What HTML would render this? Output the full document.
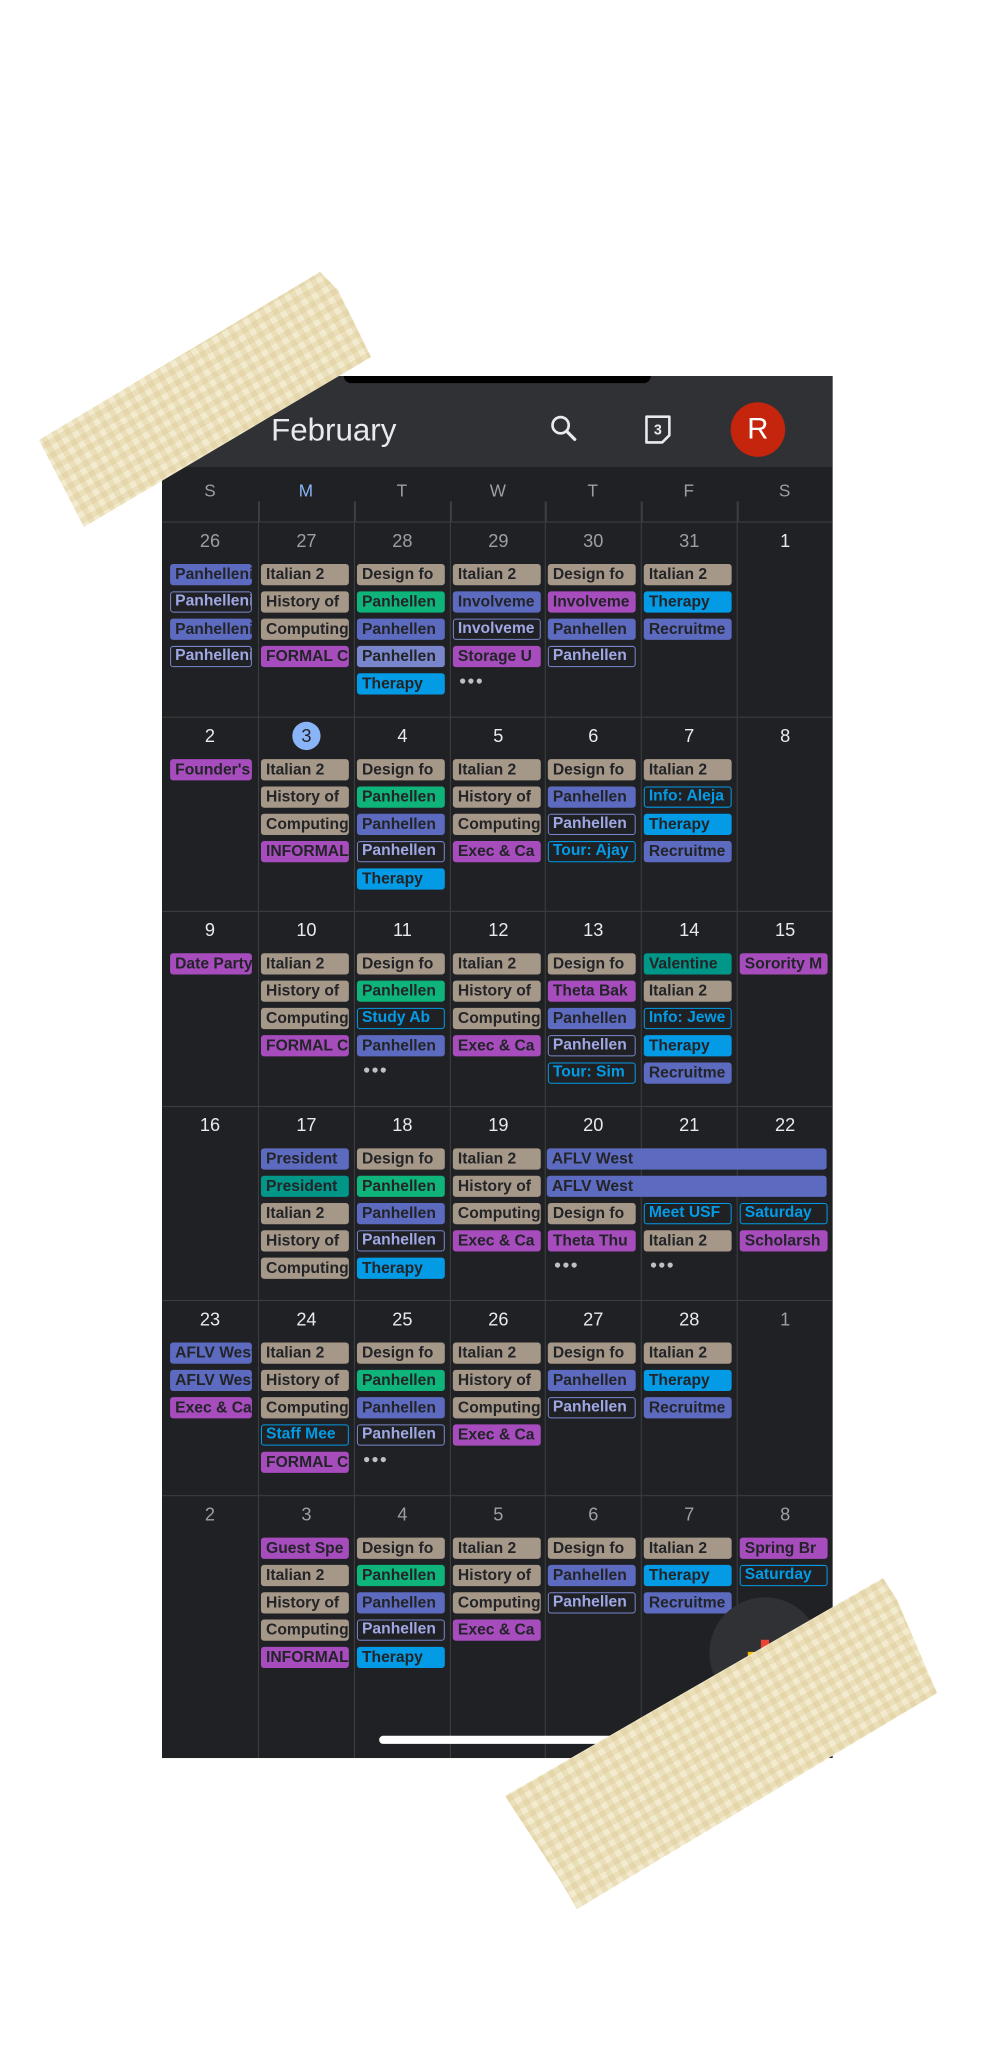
<!DOCTYPE html>
<html><head><meta charset="utf-8"><style>
*{margin:0;padding:0;box-sizing:border-box}
body{width:995px;height:2048px;background:#fff;position:relative;overflow:hidden;font-family:"Liberation Sans",sans-serif}
#scr{position:absolute;left:162px;top:376px;width:664px;height:1367px;background:#202124;overflow:hidden;transform-origin:0 0;transform:scale(1.01,1.011)}
#hdr{position:absolute;left:0;top:0;width:664px;height:90px;background:#303134}
#notch{position:absolute;left:180px;top:0;width:304px;height:7px;background:#000;border-radius:0 0 12px 12px}
.wd{position:absolute;top:104px;width:95px;text-align:center;color:#9aa0a6;font-size:17px}
.row{position:absolute;left:0;width:664px;border-top:1.5px solid #3c4043}
.cell{position:absolute;top:0;height:100%;width:95px;border-left:1.5px solid #3c4043}
.cell.f{border-left:none}
.dn{position:absolute;top:7px;left:0;width:100%;text-align:center;color:#e8eaed;font-size:18px;line-height:22px}
.dn.g{color:#9aa0a6}
.ch{position:absolute;left:2px;width:87px;height:21px;border-radius:3px;font-size:15.5px;font-weight:bold;line-height:21px;padding-left:5px;white-space:nowrap;overflow:hidden;color:#232428}
.f .ch{left:8px;width:81px}
.P{background:#5c6bc0}.T{background:#a69888}.G{background:#0fb47a}.V{background:#a64cbd}.C{background:#039be5}.L{background:#7986cb}.E{background:#009688}
.Po{border:1.5px solid #7986cb;color:#9fa8e4;line-height:18px;padding-left:4px}
.Co{border:1.5px solid #039be5;color:#039be5;line-height:18px;padding-left:4px}
.more{position:absolute;left:8px;color:#bdc1c6;font-size:12px;letter-spacing:1px}
.s0{top:41px}.s1{top:68px}.s2{top:95px}.s3{top:122px}.s4{top:149px}
.tape{position:absolute;left:0;top:0;width:995px;height:2048px;background-color:#f3ebcf;
background-image:repeating-linear-gradient(60deg,rgba(215,195,135,.3) 0 6px,transparent 6px 12px),repeating-linear-gradient(-30deg,rgba(215,195,135,.3) 0 6px,transparent 6px 12px)}
</style></head><body>
<div id="scr">
<div id="hdr"></div><div id="notch"></div>
<div style="position:absolute;left:108px;top:36px;color:#e8eaed;font-size:31px">February</div>
<svg style="position:absolute;left:382px;top:36px" width="32" height="32" viewBox="0 0 24 24"><circle cx="9.5" cy="9.5" r="6" fill="none" stroke="#e8eaed" stroke-width="2"/><path d="M14 14l6 6" stroke="#e8eaed" stroke-width="2.4" stroke-linecap="round"/></svg>
<svg style="position:absolute;left:474px;top:36px" width="34" height="34" viewBox="0 0 24 24"><path d="M4 3h16v13l-5 5H4z" fill="none" stroke="#e8eaed" stroke-width="1.8" stroke-linejoin="round"/><text x="12" y="15.5" font-size="10" font-weight="bold" text-anchor="middle" fill="#e8eaed" font-family="Liberation Sans">3</text></svg>
<div style="position:absolute;left:563px;top:26px;width:54px;height:54px;border-radius:50%;background:#c5250c;color:#fff;font-size:29px;text-align:center;line-height:54px">R</div>
<div class="wd" style="left:0">S</div><div class="wd" style="left:95px;color:#8ab4f8">M</div><div class="wd" style="left:190px">T</div><div class="wd" style="left:285px">W</div><div class="wd" style="left:379px">T</div><div class="wd" style="left:474px">F</div><div class="wd" style="left:569px">S</div>
<div style="position:absolute;left:95px;top:124px;width:1.5px;height:20px;background:#3c4043;box-shadow:95px 0 #3c4043,190px 0 #3c4043,284px 0 #3c4043,379px 0 #3c4043,474px 0 #3c4043"></div>

<div class="row" style="top:144px;height:193px">
<div class="cell f" style="left:0"><div class="dn g">26</div><div class="ch P s0">Panhellenic</div><div class="ch Po s1">Panhellenic</div><div class="ch P s2">Panhellenic</div><div class="ch Po s3">Panhellenic</div></div>
<div class="cell" style="left:95px"><div class="dn g">27</div><div class="ch T s0">Italian 2</div><div class="ch T s1">History of</div><div class="ch T s2">Computing</div><div class="ch V s3">FORMAL C</div></div>
<div class="cell" style="left:190px"><div class="dn g">28</div><div class="ch T s0">Design fo</div><div class="ch G s1">Panhellen</div><div class="ch P s2">Panhellen</div><div class="ch L s3">Panhellen</div><div class="ch C s4">Therapy</div></div>
<div class="cell" style="left:285px"><div class="dn g">29</div><div class="ch T s0">Italian 2</div><div class="ch P s1">Involveme</div><div class="ch Po s2">Involveme</div><div class="ch V s3">Storage U</div><div class="more s4">●●●</div></div>
<div class="cell" style="left:379px"><div class="dn g">30</div><div class="ch T s0">Design fo</div><div class="ch V s1">Involveme</div><div class="ch P s2">Panhellen</div><div class="ch Po s3">Panhellen</div></div>
<div class="cell" style="left:474px"><div class="dn g">31</div><div class="ch T s0">Italian 2</div><div class="ch C s1">Therapy</div><div class="ch P s2">Recruitme</div></div>
<div class="cell" style="left:569px"><div class="dn">1</div></div>
</div>
<div class="row" style="top:337px;height:192px">
<div class="cell f" style="left:0"><div class="dn">2</div><div class="ch V s0">Founder's</div></div>
<div class="cell" style="left:95px"><div class="dn"><span style="display:inline-block;width:28px;height:28px;border-radius:50%;background:#8ab4f8;color:#202124;line-height:28px;margin-top:-3px">3</span></div><div class="ch T s0">Italian 2</div><div class="ch T s1">History of</div><div class="ch T s2">Computing</div><div class="ch V s3">INFORMAL</div></div>
<div class="cell" style="left:190px"><div class="dn">4</div><div class="ch T s0">Design fo</div><div class="ch G s1">Panhellen</div><div class="ch P s2">Panhellen</div><div class="ch Po s3">Panhellen</div><div class="ch C s4">Therapy</div></div>
<div class="cell" style="left:285px"><div class="dn">5</div><div class="ch T s0">Italian 2</div><div class="ch T s1">History of</div><div class="ch T s2">Computing</div><div class="ch V s3">Exec &amp; Ca</div></div>
<div class="cell" style="left:379px"><div class="dn">6</div><div class="ch T s0">Design fo</div><div class="ch P s1">Panhellen</div><div class="ch Po s2">Panhellen</div><div class="ch Co s3">Tour: Ajay</div></div>
<div class="cell" style="left:474px"><div class="dn">7</div><div class="ch T s0">Italian 2</div><div class="ch Co s1">Info: Aleja</div><div class="ch C s2">Therapy</div><div class="ch P s3">Recruitme</div></div>
<div class="cell" style="left:569px"><div class="dn">8</div></div>
</div>
<div class="row" style="top:529px;height:193px">
<div class="cell f" style="left:0"><div class="dn">9</div><div class="ch V s0">Date Party</div></div>
<div class="cell" style="left:95px"><div class="dn">10</div><div class="ch T s0">Italian 2</div><div class="ch T s1">History of</div><div class="ch T s2">Computing</div><div class="ch V s3">FORMAL C</div></div>
<div class="cell" style="left:190px"><div class="dn">11</div><div class="ch T s0">Design fo</div><div class="ch G s1">Panhellen</div><div class="ch Co s2">Study Ab</div><div class="ch P s3">Panhellen</div><div class="more s4">●●●</div></div>
<div class="cell" style="left:285px"><div class="dn">12</div><div class="ch T s0">Italian 2</div><div class="ch T s1">History of</div><div class="ch T s2">Computing</div><div class="ch V s3">Exec &amp; Ca</div></div>
<div class="cell" style="left:379px"><div class="dn">13</div><div class="ch T s0">Design fo</div><div class="ch V s1">Theta Bak</div><div class="ch P s2">Panhellen</div><div class="ch Po s3">Panhellen</div><div class="ch Co s4">Tour: Sim</div></div>
<div class="cell" style="left:474px"><div class="dn">14</div><div class="ch E s0">Valentine</div><div class="ch T s1">Italian 2</div><div class="ch Co s2">Info: Jewe</div><div class="ch C s3">Therapy</div><div class="ch P s4">Recruitme</div></div>
<div class="cell" style="left:569px"><div class="dn">15</div><div class="ch V s0">Sorority M</div></div>
</div>
<div class="row" style="top:722px;height:192px">
<div class="cell f" style="left:0"><div class="dn">16</div></div>
<div class="cell" style="left:95px"><div class="dn">17</div><div class="ch P s0">President</div><div class="ch E s1">President</div><div class="ch T s2">Italian 2</div><div class="ch T s3">History of</div><div class="ch T s4">Computing</div></div>
<div class="cell" style="left:190px"><div class="dn">18</div><div class="ch T s0">Design fo</div><div class="ch G s1">Panhellen</div><div class="ch P s2">Panhellen</div><div class="ch Po s3">Panhellen</div><div class="ch C s4">Therapy</div></div>
<div class="cell" style="left:285px"><div class="dn">19</div><div class="ch T s0">Italian 2</div><div class="ch T s1">History of</div><div class="ch T s2">Computing</div><div class="ch V s3">Exec &amp; Ca</div></div>
<div class="cell" style="left:379px"><div class="dn">20</div><div class="ch T s2">Design fo</div><div class="ch V s3">Theta Thu</div><div class="more s4">●●●</div></div>
<div class="cell" style="left:474px"><div class="dn">21</div><div class="ch Co s2">Meet USF</div><div class="ch T s3">Italian 2</div><div class="more s4">●●●</div></div>
<div class="cell" style="left:569px"><div class="dn">22</div><div class="ch Co s2">Saturday</div><div class="ch V s3">Scholarsh</div></div>
<div class="ch P" style="left:381px;top:41px;width:277px">AFLV West</div>
<div class="ch P" style="left:381px;top:68px;width:277px">AFLV West</div>
</div>
<div class="row" style="top:914px;height:193px">
<div class="cell f" style="left:0"><div class="dn">23</div><div class="ch P s0">AFLV West</div><div class="ch P s1">AFLV West</div><div class="ch V s2">Exec &amp; Ca</div></div>
<div class="cell" style="left:95px"><div class="dn">24</div><div class="ch T s0">Italian 2</div><div class="ch T s1">History of</div><div class="ch T s2">Computing</div><div class="ch Co s3">Staff Mee</div><div class="ch V s4">FORMAL C</div></div>
<div class="cell" style="left:190px"><div class="dn">25</div><div class="ch T s0">Design fo</div><div class="ch G s1">Panhellen</div><div class="ch P s2">Panhellen</div><div class="ch Po s3">Panhellen</div><div class="more s4">●●●</div></div>
<div class="cell" style="left:285px"><div class="dn">26</div><div class="ch T s0">Italian 2</div><div class="ch T s1">History of</div><div class="ch T s2">Computing</div><div class="ch V s3">Exec &amp; Ca</div></div>
<div class="cell" style="left:379px"><div class="dn">27</div><div class="ch T s0">Design fo</div><div class="ch P s1">Panhellen</div><div class="ch Po s2">Panhellen</div></div>
<div class="cell" style="left:474px"><div class="dn">28</div><div class="ch T s0">Italian 2</div><div class="ch C s1">Therapy</div><div class="ch P s2">Recruitme</div></div>
<div class="cell" style="left:569px"><div class="dn g">1</div></div>
</div>
<div class="row" style="top:1107px;height:270px">
<div class="cell f" style="left:0"><div class="dn g">2</div></div>
<div class="cell" style="left:95px"><div class="dn g">3</div><div class="ch V s0">Guest Spe</div><div class="ch T s1">Italian 2</div><div class="ch T s2">History of</div><div class="ch T s3">Computing</div><div class="ch V s4">INFORMAL</div></div>
<div class="cell" style="left:190px"><div class="dn g">4</div><div class="ch T s0">Design fo</div><div class="ch G s1">Panhellen</div><div class="ch P s2">Panhellen</div><div class="ch Po s3">Panhellen</div><div class="ch C s4">Therapy</div></div>
<div class="cell" style="left:285px"><div class="dn g">5</div><div class="ch T s0">Italian 2</div><div class="ch T s1">History of</div><div class="ch T s2">Computing</div><div class="ch V s3">Exec &amp; Ca</div></div>
<div class="cell" style="left:379px"><div class="dn g">6</div><div class="ch T s0">Design fo</div><div class="ch P s1">Panhellen</div><div class="ch Po s2">Panhellen</div></div>
<div class="cell" style="left:474px"><div class="dn g">7</div><div class="ch T s0">Italian 2</div><div class="ch C s1">Therapy</div><div class="ch P s2">Recruitme</div></div>
<div class="cell" style="left:569px"><div class="dn g">8</div><div class="ch V s0">Spring Br</div><div class="ch Co s1">Saturday</div></div>
</div>
<div style="position:absolute;left:215px;top:1345px;width:236px;height:8px;border-radius:4px;background:#fff"></div>
<div style="position:absolute;left:542px;top:1208px;width:110px;height:110px;border-radius:50%;background:#303134"></div>
<div style="position:absolute;left:580px;top:1262px;width:14px;height:8px;background:#fbbc04"></div>
<div style="position:absolute;left:593px;top:1250px;width:8px;height:14px;background:#ea4335"></div>
<div style="position:absolute;left:600px;top:1262px;width:14px;height:8px;background:#4285f4"></div>
<div style="position:absolute;left:593px;top:1269px;width:8px;height:12px;background:#34a853"></div>
</div>
<div class="tape" style="clip-path:polygon(39px 440px,320px 272px,338px 290px,371px 357px,84px 527px,70px 500px)"></div>
<div class="tape" style="clip-path:polygon(505px 1796px,883px 1578px,897px 1600px,937px 1693px,577px 1909px,560px 1880px)"></div>
</body></html>
